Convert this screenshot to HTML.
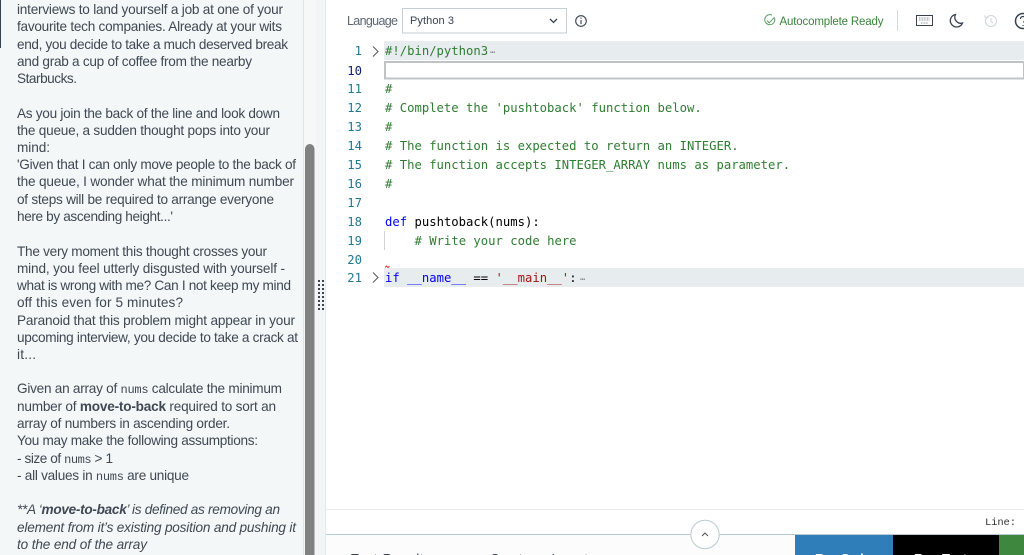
<!DOCTYPE html>
<html><head><meta charset="utf-8"><style>
html,body{margin:0;padding:0;background:#fff;width:1024px;height:555px;overflow:hidden}
svg{display:block}
.p text{font-family:"Liberation Sans",sans-serif;font-size:13.6px;fill:#3f4853}
.p .m{font-family:"Liberation Mono",monospace;font-size:12px}
.c text{font-family:"DejaVu Sans Mono",monospace;font-size:12.24px;fill:#000;white-space:pre}
.c .n{fill:#237893;text-anchor:end}
.g{fill:#2f7d32 !important}.k{fill:#0000ff !important}.s{fill:#a31515 !important}
</style></head><body>
<svg width="1024" height="555" viewBox="0 0 1024 555" xmlns="http://www.w3.org/2000/svg">
<rect x="0" y="0" width="303" height="555" fill="#f3f7f7"/>
<rect x="0" y="0" width="1" height="48" fill="#39424e"/>
<rect x="303" y="0" width="1" height="555" fill="#dfe5e6"/>
<rect x="304" y="0" width="12" height="555" fill="#f6f8f8"/>
<path d="M305 149a4.750 5 0 0 1 9.500 0V555H305z" fill="#7f8281"/>
<rect x="316" y="0" width="10" height="555" fill="#f1f5f6"/>
<rect x="325" y="0" width="1" height="555" fill="#e4e9ea"/>
<g fill="#39424e">
<rect x="318" y="280" width="2" height="2"/><rect x="322" y="280" width="2" height="2"/>
<rect x="318" y="284" width="2" height="2"/><rect x="322" y="284" width="2" height="2"/>
<rect x="318" y="288" width="2" height="2"/><rect x="322" y="288" width="2" height="2"/>
<rect x="318" y="292" width="2" height="2"/><rect x="322" y="292" width="2" height="2"/>
<rect x="318" y="296" width="2" height="2"/><rect x="322" y="296" width="2" height="2"/>
<rect x="318" y="300" width="2" height="2"/><rect x="322" y="300" width="2" height="2"/>
<rect x="318" y="304" width="2" height="2"/><rect x="322" y="304" width="2" height="2"/>
<rect x="318" y="308" width="2" height="2"/><rect x="322" y="308" width="2" height="2"/>
</g>
<g class="p">
<text x="17" y="14" textLength="266">interviews to land yourself a job at one of your</text>
<text x="17" y="31" textLength="265">favourite tech companies. Already at your wits</text>
<text x="17" y="49" textLength="271">end, you decide to take a much deserved break</text>
<text x="17" y="66" textLength="235">and grab a cup of coffee from the nearby</text>
<text x="17" y="83" textLength="60">Starbucks.</text>
<text x="17" y="118" textLength="263">As you join the back of the line and look down</text>
<text x="17" y="135" textLength="253">the queue, a sudden thought pops into your</text>
<text x="17" y="152" textLength="33">mind:</text>
<text x="17" y="169" textLength="279">'Given that I can only move people to the back of</text>
<text x="17" y="186" textLength="277">the queue, I wonder what the minimum number</text>
<text x="17" y="204" textLength="257">of steps will be required to arrange everyone</text>
<text x="17" y="221" textLength="156">here by ascending height...'</text>
<text x="17" y="256" textLength="250">The very moment this thought crosses your</text>
<text x="17" y="273" textLength="268">mind, you feel utterly disgusted with yourself -</text>
<text x="17" y="290" textLength="274">what is wrong with me? Can I not keep my mind</text>
<text x="17" y="307" textLength="166">off this even for 5 minutes?</text>
<text x="17" y="325" textLength="278">Paranoid that this problem might appear in your</text>
<text x="17" y="342" textLength="281">upcoming interview, you decide to take a crack at</text>
<text x="17" y="359" textLength="19">it...</text>
<text x="17" y="393" textLength="265">Given an array of <tspan class="m">nums</tspan> calculate the minimum</text>
<text x="17" y="411" textLength="259">number of <tspan font-weight="bold">move-to-back</tspan> required to sort an</text>
<text x="17" y="428" textLength="213">array of numbers in ascending order.</text>
<text x="17" y="445" textLength="241">You may make the following assumptions:</text>
<text x="17" y="463" textLength="96">- size of <tspan class="m">nums</tspan> &gt; 1</text>
<text x="17" y="480" textLength="172">- all values in <tspan class="m">nums</tspan> are unique</text>
<text x="17" y="514" textLength="263" font-style="italic">**A ‘<tspan font-weight="bold">move-to-back</tspan>’ is defined as removing an</text>
<text x="17" y="532" textLength="279" font-style="italic">element from it’s existing position and pushing it</text>
<text x="17" y="549" textLength="130" font-style="italic">to the end of the array</text>
</g>
<text x="347" y="25" font-family="Liberation Sans,sans-serif" font-size="12.5" fill="#5b6670" textLength="51">Language</text>
<rect x="402.500" y="8.500" width="164" height="24.500" fill="#fff" stroke="#c5ced2"/>
<text x="410" y="24" font-family="Liberation Sans,sans-serif" font-size="11" fill="#39424e" textLength="44">Python 3</text>
<path d="M550 19l3.500 3.500 3.500-3.500" fill="none" stroke="#39424e" stroke-width="1.300"/>
<circle cx="581" cy="21" r="5.300" fill="none" stroke="#39424e" stroke-width="1.100"/>
<path d="M581 20v4M581 17.500v1.300" stroke="#39424e" stroke-width="1.100" fill="none"/>
<path d="M774.500 18a5 5 0 1 1-2.500-2.800" fill="none" stroke="#5c9a60" stroke-width="1"/>
<path d="M767 20.500l2.300 2.300 5.200-5.600" fill="none" stroke="#5c9a60" stroke-width="1"/>
<text x="779.500" y="25" font-family="Liberation Sans,sans-serif" font-size="11.500" fill="#39853c" textLength="104">Autocomplete Ready</text>
<rect x="897" y="10" width="1" height="21" fill="#d3d8db"/>
<rect x="916.500" y="15.500" width="16" height="10" fill="none" stroke="#39424e" stroke-width="1"/>
<path d="M919 18h11M919 20h11M921 23h7" stroke="#8a939b" stroke-width="1" stroke-dasharray="1 .6" fill="none"/>
<path d="M955.500 14.500a6.300 6.300 0 1 0 7 8.500a6 6 0 0 1-7-8.500z" fill="none" stroke="#39424e" stroke-width="1.300"/>
<circle cx="991" cy="21" r="5.500" fill="none" stroke="#d0d8db" stroke-width="1.100"/>
<path d="M991 18v3.500l2 1.500M984.500 15.500l1.500 2.500 2.500-1" stroke="#d0d8db" stroke-width="1" fill="none"/>
<circle cx="1023" cy="21" r="7.500" fill="none" stroke="#39424e" stroke-width="1.500"/>
<path d="M1020.500 19a2.500 2.500 0 1 1 3.500 2.300v1.500M1023 25v1" fill="none" stroke="#39424e" stroke-width="1.200"/>
<rect x="384" y="41" width="640" height="19" fill="#e7ecef"/>
<rect x="385" y="62" width="639" height="16.500" fill="#fff" stroke="#bfc3c4" stroke-width="2"/>
<rect x="384" y="268" width="640" height="19" fill="#e7ecef"/>
<rect x="384" y="231" width="1" height="19" fill="#d3d3d3"/>
<path d="M373 46.500l5 5-5 5M373 272.500l5 5-5 5" fill="none" stroke="#555" stroke-width="1"/>
<path d="M385 267.500l1.500-1.500 1.500 1.500 1.500-1.500" fill="none" stroke="#d00" stroke-width=".8"/>
<g class="c">
<text class="n" x="362" y="55">1</text>
<text class="n" x="362" y="75" style="fill:#0b216f">10</text>
<text class="n" x="362" y="93">11</text>
<text class="n" x="362" y="112">12</text>
<text class="n" x="362" y="131">13</text>
<text class="n" x="362" y="150">14</text>
<text class="n" x="362" y="169">15</text>
<text class="n" x="362" y="188">16</text>
<text class="n" x="362" y="207">17</text>
<text class="n" x="362" y="226">18</text>
<text class="n" x="362" y="245">19</text>
<text class="n" x="362" y="264">20</text>
<text class="n" x="362" y="282">21</text>
<text class="g" x="385" y="55">#!/bin/python3</text>
<text x="490" y="55" style="font-size:9px;fill:#777">⋯</text>
<text class="g" x="385" y="93">#</text>
<text class="g" x="385" y="112">#&#160;Complete the 'pushtoback' function below.</text>
<text class="g" x="385" y="131">#</text>
<text class="g" x="385" y="150">#&#160;The function is expected to return an INTEGER.</text>
<text class="g" x="385" y="169">#&#160;The function accepts INTEGER_ARRAY nums as parameter.</text>
<text class="g" x="385" y="188">#</text>
<text x="385" y="226"><tspan class="k">def</tspan> pushtoback(nums):</text>
<text class="g" x="414.500" y="245">#&#160;Write your code here</text>
<text x="385" y="282"><tspan class="k">if</tspan> <tspan class="k">__name__</tspan> == <tspan class="s">'__main__'</tspan>:</text>
<text x="580" y="282" style="font-size:9px;fill:#777">⋯</text>
</g>
<rect x="326" y="509" width="698" height="1" fill="#e8e9ea"/>
<text x="985" y="525" font-family="Liberation Mono,monospace" font-size="10.500" fill="#333" textLength="31">Line:</text>
<rect x="326" y="534" width="698" height="1" fill="#b7cbd0"/>
<rect x="326" y="535" width="469" height="20" fill="#fcfcfc"/>
<circle cx="705" cy="534.500" r="14.200" fill="#fff" stroke="#b7cbd0"/>
<path d="M702 536l3-3 3 3" fill="none" stroke="#555" stroke-width="1"/>
<text x="351" y="563" font-family="Liberation Sans,sans-serif" font-size="13" fill="#39424e" textLength="80">Test Results</text>
<text x="490" y="563" font-family="Liberation Sans,sans-serif" font-size="13" fill="#39424e" textLength="98">Custom Input</text>
<rect x="795" y="535" width="98" height="20" fill="#2f7db9"/>
<rect x="893" y="535" width="106" height="20" fill="#000"/>
<rect x="999" y="535" width="25" height="20" fill="#3e873e"/>
<text x="815" y="563" font-family="Liberation Sans,sans-serif" font-size="13" font-weight="bold" fill="#fff" textLength="55">Run Code</text>
<text x="914" y="563" font-family="Liberation Sans,sans-serif" font-size="13" font-weight="bold" fill="#fff" textLength="60">Run Tests</text>
</svg>
</body></html>
